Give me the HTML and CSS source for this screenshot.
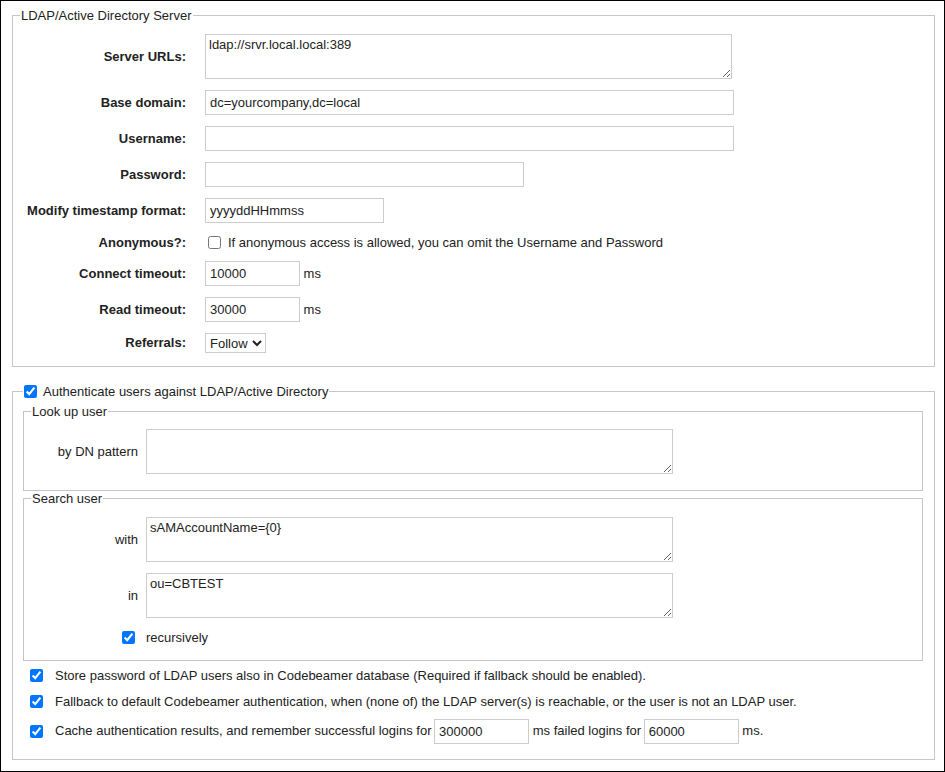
FILE: index.html
```html
<!DOCTYPE html>
<html>
<head>
<meta charset="utf-8">
<link rel="stylesheet" href="styles.css">
</head>
<body>
<div class="frame">
  <fieldset class="fs fs-server">
    <legend class="lg">LDAP/Active Directory Server</legend>
    <div class="form-grid">
      <label class="lbl">Server URLs:</label>
      <div class="fld"><textarea class="ta">ldap://srvr.local.local:389</textarea></div>

      <label class="lbl">Base domain:</label>
      <div class="fld"><input class="inp inp-wide" type="text" value="dc=yourcompany,dc=local"></div>

      <label class="lbl">Username:</label>
      <div class="fld"><input class="inp inp-wide" type="text" value=""></div>

      <label class="lbl">Password:</label>
      <div class="fld"><input class="inp inp-pass" type="password" value=""></div>

      <label class="lbl">Modify timestamp format:</label>
      <div class="fld"><input class="inp inp-fmt" type="text" value="yyyyddHHmmss"></div>

      <label class="lbl">Anonymous?:</label>
      <div class="fld fld-check"><input class="cb cb-anon" type="checkbox"><span class="cb-text">If anonymous access is allowed, you can omit the Username and Password</span></div>

      <label class="lbl">Connect timeout:</label>
      <div class="fld"><input class="inp inp-num" type="text" value="10000"> ms</div>

      <label class="lbl">Read timeout:</label>
      <div class="fld"><input class="inp inp-num" type="text" value="30000"> ms</div>

      <label class="lbl lbl-ref">Referrals:</label>
      <div class="fld"><select class="sel"><option>Follow</option><option>Ignore</option></select></div>
    </div>
  </fieldset>

  <fieldset class="fs fs-auth">
    <legend class="lg lg-check"><input class="cb cb-legend" type="checkbox" checked><span>Authenticate users against LDAP/Active Directory</span></legend>

    <fieldset class="fs fs-inner fs-lookup">
      <legend class="lg">Look up user</legend>
      <div class="inner-grid">
        <label class="ilbl">by DN pattern</label>
        <div class="fld"><textarea class="ta"></textarea></div>
      </div>
    </fieldset>

    <fieldset class="fs fs-inner fs-search">
      <legend class="lg">Search user</legend>
      <div class="inner-grid">
        <label class="ilbl">with</label>
        <div class="fld"><textarea class="ta">sAMAccountName={0}</textarea></div>

        <label class="ilbl">in</label>
        <div class="fld"><textarea class="ta">ou=CBTEST</textarea></div>

        <div class="ilbl ilbl-check"><input class="cb cb-rec" type="checkbox" checked></div>
        <div class="fld fld-check">recursively</div>
      </div>
    </fieldset>

    <div class="opts">
      <div class="opt"><input class="cb cb-opt" type="checkbox" checked><span>Store password of LDAP users also in Codebeamer database (Required if fallback should be enabled).</span></div>
      <div class="opt"><input class="cb cb-opt" type="checkbox" checked><span>Fallback to default Codebeamer authentication, when (none of) the LDAP server(s) is reachable, or the user is not an LDAP user.</span></div>
      <div class="opt opt-cache"><input class="cb cb-opt" type="checkbox" checked><span class="opt-line">Cache authentication results, and remember successful logins for <input class="inp inp-num inp-c1" type="text" value="300000"> ms failed logins for <input class="inp inp-num inp-c2" type="text" value="60000"> ms.</span></div>
    </div>
  </fieldset>
</div>
</body>
</html>
```

FILE: styles.css
```css
html, body {
  margin: 0;
  padding: 0;
  background: #fff;
}

body {
  font-family: "Liberation Sans", Arial, sans-serif;
  font-size: 13px;
  line-height: 15px;
  color: #222;
}

.frame {
  width: 945px;
  height: 772px;
  box-sizing: border-box;
  border: 1px solid #000;
  padding: 7px 0 0 11px;
}

.fs {
  margin: 0;
  border: 1px solid #c6c6c6;
  min-width: 0;
}

.fs-server {
  width: 923px;
  box-sizing: border-box;
  padding: 11px 0 13px 0;
  margin-bottom: 15px;
}

.fs-auth {
  width: 923px;
  box-sizing: border-box;
  padding: 3px 11px 15px 10px;
}

.fs-inner {
  padding: 0;
}

.fs-lookup {
  padding: 10px 0 16px 0;
}

.fs-search {
  padding: 11px 0 15px 0;
}

.lg {
  margin-left: 7px;
  padding: 0 1px;
  line-height: 15px;
}

.lg-check {
  margin-left: 0;
  padding: 0 1px;
  display: flex;
  align-items: center;
  height: 19px;
}

.cb {
  width: 13px;
  height: 13px;
  margin: 0;
  flex: none;
}

.cb-legend {
  margin: 0 6px 0 0;
}

.form-grid {
  display: grid;
  grid-template-columns: 173px 1fr;
  column-gap: 19px;
  row-gap: 11px;
  align-items: center;
}

.lbl {
  text-align: right;
  font-weight: bold;
}

.lbl-ref {
  position: relative;
  top: -1px;
}

.fld {
  display: flex;
  align-items: center;
  white-space: pre;
}

.fld-check {
  height: 16px;
}

.cb-anon {
  margin: 0 3px 0 3px;
}

.cb-text {
  margin-left: 4px;
}

.inp {
  box-sizing: border-box;
  height: 25px;
  border: 1px solid #cccccc;
  border-radius: 0;
  padding: 0 4px;
  font-family: "Liberation Sans", Arial, sans-serif;
  font-size: 13px;
  color: #222;
  background: #fff;
  margin: 0;
  outline: none;
}

.inp-wide { width: 529px; }
.inp-pass { width: 319px; }
.inp-fmt { width: 179px; }
.inp-num { width: 95px; }

.ta {
  box-sizing: border-box;
  width: 527px;
  height: 45px;
  border: 1px solid #cccccc;
  border-radius: 0;
  padding: 2px 3px;
  margin: 0;
  font-family: "Liberation Sans", Arial, sans-serif;
  font-size: 13px;
  line-height: 15px;
  color: #222;
  background: #fff;
  display: block;
}

.sel {
  box-sizing: border-box;
  width: 61px;
  height: 20px;
  border: 1px solid #cccccc;
  border-radius: 0;
  padding: 0;
  margin: 0;
  font-family: "Liberation Sans", Arial, sans-serif;
  font-size: 13px;
  color: #222;
  background: #fff;
}

.inner-grid {
  display: grid;
  grid-template-columns: 114px 1fr;
  column-gap: 8px;
  row-gap: 11px;
  align-items: center;
}

.ilbl {
  text-align: right;
}

.ilbl-check {
  display: flex;
  justify-content: flex-end;
  align-items: center;
  height: 16px;
}

.cb-rec {
  margin: 0 3px 0 0;
}

.opts {
  display: flex;
  flex-direction: column;
  row-gap: 10px;
  margin-top: 6px;
}

.opt {
  display: flex;
  align-items: center;
  min-height: 16px;
}

.opt-cache {
  height: 25px;
}

.cb-opt {
  margin: 0 12px 0 7px;
}

.opt-line {
  white-space: nowrap;
}

.opt-line .inp {
  vertical-align: middle;
}

.inp-c1 {
  margin-left: -1px;
}

.inp-c2 {
  margin-left: -1px;
}
```
